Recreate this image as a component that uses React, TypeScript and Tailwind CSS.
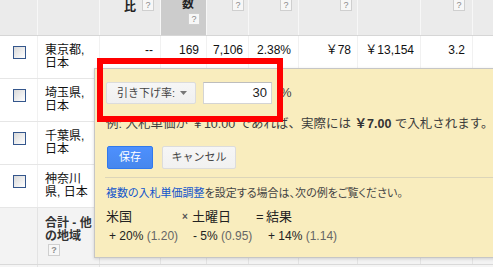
import React from 'react'

const COLS = 'grid grid-cols-[38px_62px_61px_46px_42px_50px_59px_63px_52px_1fr]'

const ROWS = [
  { name: ['東京都,', '日本'], vals: ['--', '169', '7,106', '2.38%', '￥78', '￥13,154', '3.2'] },
  { name: ['埼玉県,', '日本'], vals: [] as string[] },
  { name: ['千葉県,', '日本'], vals: [] as string[] },
  { name: ['神奈川', '県, 日本'], vals: [] as string[] },
]

function Help({ className = '' }: { className?: string }) {
  return (
    <span
      className={`flex h-[12px] w-[12px] shrink-0 items-center justify-center border border-[#cfcfcf] bg-[#f7f7f7] text-[9px] leading-none text-[#8a8a8a] ${className}`}
    >
      ?
    </span>
  )
}

function Checkbox() {
  return (
    <span className="mt-[10px] ml-[13px] block h-[13px] w-[13px] border border-[#34568c] bg-linear-to-br from-[#d9d9d9] to-white" />
  )
}

function HeaderRow() {
  const cell = 'flex border-r border-[#f7f7f7] overflow-hidden'
  return (
    <div className={`${COLS} h-[36px] border-b border-[#d6d6d6] bg-[#ebebeb]`}>
      <div className={cell} />
      <div className={cell} />
      <div className={`${cell} items-start justify-end gap-[6px] pr-[6px]`}>
        <span className="mt-[1px] text-[12px] leading-[13px] font-bold">比</span>
        <Help className="-mt-[1px]" />
      </div>
      <div className={`${cell} flex-col items-end bg-[#cccccc] pr-[6px]`}>
        <span className="-mt-[2px] mr-[6px] text-[12px] leading-[13px] font-bold">数</span>
        <Help className="mt-[2px]" />
      </div>
      <div className={`${cell} items-start justify-end pr-[4px]`}>
        <Help className="-mt-[1px]" />
      </div>
      <div className={`${cell} items-start justify-end pr-[6px]`}>
        <Help className="-mt-[1px]" />
      </div>
      <div className={`${cell} items-start justify-end pr-[5px]`}>
        <Help className="-mt-[1px]" />
      </div>
      <div className={cell} />
      <div className={`${cell} items-start justify-end pr-[7px]`}>
        <Help className="-mt-[1px]" />
      </div>
      <div />
    </div>
  )
}

function BodyRow({ name, vals }: { name: string[]; vals: string[] }) {
  const cell = 'border-r border-[#f1f1f1] pt-[8px] text-right text-[12px] leading-[13px]'
  return (
    <div className={`${COLS} h-[43px] border-b border-[#e6e6e6] bg-white text-[#111]`}>
      <div className="border-r border-[#f1f1f1]">
        <Checkbox />
      </div>
      <div className="border-r border-[#f1f1f1] pt-[8px] pl-[7px] text-[12px] leading-[13px]">
        <div>{name[0]}</div>
        <div>{name[1]}</div>
      </div>
      <div className={`${cell} pr-[7px]`}>{vals[0]}</div>
      <div className={`${cell} pr-[7px]`}>{vals[1]}</div>
      <div className={`${cell} pr-[5px]`}>{vals[2]}</div>
      <div className={`${cell} pr-[7px]`}>{vals[3]}</div>
      <div className={`${cell} pr-[6px]`}>{vals[4]}</div>
      <div className={`${cell} pr-[6px]`}>{vals[5]}</div>
      <div className={`${cell} pr-[7px]`}>{vals[6]}</div>
      <div />
    </div>
  )
}

function TotalRow() {
  const cell = 'border-r border-[#e3e3e3]'
  return (
    <div className={`${COLS} h-[57px] border-b border-[#d9d9d9] bg-[#f3f3f3] text-[#333]`}>
      <div className={cell} />
      <div className={`${cell} pt-[9px] pl-[7px] text-[12px] leading-[13px] font-bold`}>
        <div>合計 - 他</div>
        <div>の地域</div>
        <Help className="mt-[1px] ml-[3px]" />
      </div>
      <div className={cell} />
      <div className={cell} />
      <div className={cell} />
      <div className={cell} />
      <div className={cell} />
      <div className={cell} />
      <div className={cell} />
      <div />
    </div>
  )
}

function BidPopup() {
  return (
    <div className="absolute top-[68px] left-[94px] h-[190px] w-[420px] border border-[#c6c6c6] bg-[#f9edbe] pt-[13px] pl-[11px] text-[#3c3c3c] shadow-[0_1px_3px_rgba(0,0,0,0.15)]">
      <div className="flex items-center">
        <button className="flex h-[22px] w-[90px] items-center rounded-[2px] border border-[#dcdcdc] bg-linear-to-b from-[#f6f6f6] to-[#f0f0f0] pl-[10px] text-[11px] text-[#444]">
          引き下げ率:
          <svg className="ml-[5px]" width="7" height="4" viewBox="0 0 7 4">
            <path d="M0 0h7L3.5 4z" fill="#777" />
          </svg>
        </button>
        <div className="ml-[7px] flex h-[22px] w-[69px] items-center justify-end border border-[#d4d4d4] border-t-[#bdbdbd] bg-white pr-[4px] text-[13px] text-[#222]">
          30
        </div>
        <span className="ml-[8px] text-[13px] text-[#444]">%</span>
      </div>

      <p className="mt-[12px] text-[12.5px] leading-[16px] whitespace-nowrap">
        例: 入札単価が ￥10.00 であれば、実際には <b className="text-[#333]">￥7.00</b> で入札されます。
      </p>

      <div className="mt-[14px] flex gap-[9px] pl-[1px]">
        <button className="h-[23px] w-[46px] rounded-[2px] border border-[#3079ed] bg-linear-to-b from-[#4d90fe] to-[#4787ed] text-[11px] text-white">
          保存
        </button>
        <button className="h-[23px] w-[74px] rounded-[2px] border border-[#dcdcdc] bg-linear-to-b from-[#f6f6f6] to-[#f1f1f1] text-[11px] text-[#444]">
          キャンセル
        </button>
      </div>

      <div className="mt-[8px] -ml-[1px] h-px bg-[#dcd5b9]" />

      <p className="mt-[8px] text-[11px] leading-[14px] whitespace-nowrap text-[#444] [font-feature-settings:'palt']">
        <span className="text-[#15c]">複数の入札単価調整</span>を設定する場合は、次の例をご覧ください。
      </p>

      <div className="mt-[9px] grid grid-cols-[76px_74px_1fr] text-[#222]">
        <div className="text-[13px] leading-[16px]">米国</div>
        <div className="flex text-[13px] leading-[16px]">
          <span className="w-[10px] text-[10px] font-bold text-[#555]">×</span>
          土曜日
        </div>
        <div className="flex text-[13px] leading-[16px]">
          <span className="w-[10px]">=</span>
          結果
        </div>
        <div className="mt-[3px] pl-[3px] text-[12px] leading-[16px] whitespace-nowrap">
          + 20% <span className="text-[#666]">(1.20)</span>
        </div>
        <div className="mt-[3px] pl-[11px] text-[12px] leading-[16px] whitespace-nowrap">
          - 5% <span className="text-[#666]">(0.95)</span>
        </div>
        <div className="mt-[3px] pl-[12px] text-[12px] leading-[16px] whitespace-nowrap">
          + 14% <span className="text-[#666]">(1.14)</span>
        </div>
      </div>
    </div>
  )
}

export default function App() {
  return (
    <div className="relative h-[267px] w-[493px] overflow-hidden bg-white font-['Liberation_Sans','Noto_Sans_CJK_JP',sans-serif] text-[#222]">
      <HeaderRow />
      {ROWS.map((row, i) => (
        <BodyRow key={i} name={row.name} vals={row.vals} />
      ))}
      <TotalRow />
      <div className={`${COLS} h-[10px] bg-[#f5f5f5]`}>
        <div className="border-r border-[#e3e3e3]" />
        <div className="border-r border-[#e3e3e3]" />
      </div>

      <BidPopup />

      <div className="absolute top-[58px] left-[97px] h-[64px] w-[186px] border-[6px] border-[#ff0000]" />
    </div>
  )
}
